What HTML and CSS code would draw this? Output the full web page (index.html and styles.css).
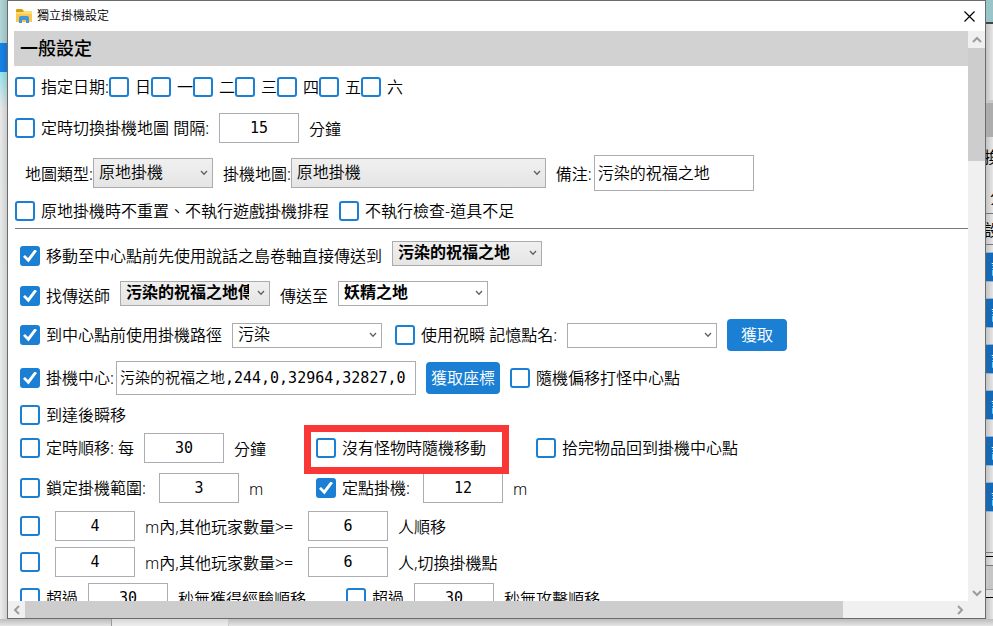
FILE: index.html
```html
<!DOCTYPE html>
<html lang="zh-Hant">
<head>
<meta charset="utf-8">
<title>獨立掛機設定</title>
<link rel="stylesheet" href="styles.css">
</head>
<body>
<svg class="defs" aria-hidden="true">
  <symbol id="down" viewBox="0 0 8 6"><path d="M1 1l3 3.2L7 1" fill="none" stroke="#606060" stroke-width="1.3"/></symbol>
  <symbol id="arrow" viewBox="0 0 10 10"><path d="M1 7l4-4 4 4" fill="none" stroke="#9c9c9c" stroke-width="2"/></symbol>
</svg>
<div class="desktop">
  <div class="behind behind-left"></div>
  <main class="window">
    <header class="titlebar">
      <svg class="folder" viewBox="0 0 16 15" aria-hidden="true"><path d="M0 3V1q0-1 1-1h5l2 2v1z" fill="#dc9c0c"/><path d="M0 3h7l1-1h7q1 0 1 1v10H0z" fill="#ffdc70"/><path d="M0 5h16v8H0z" fill="#fdc84c"/><path d="M3 14V9q0-2 2-2h6q2 0 2 2v5h-3v-3H6v3z" fill="#3f96dd"/></svg>
      <span class="title">獨立掛機設定</span>
      <button class="close" type="button" aria-label="關閉"><svg viewBox="0 0 11 11"><path d="M.5.5l10 10M10.500.5l-10 10" stroke="#000" stroke-width="1.200"/></svg></button>
    </header>
    <div class="body">
      <form class="content">
        <h1>一般設定</h1>
        <div class="row h41 tight">
          <label class="check"><input type="checkbox"><span>指定日期:</span></label>
          <label class="check"><input type="checkbox"><span>日</span></label>
          <label class="check"><input type="checkbox"><span>一</span></label>
          <label class="check"><input type="checkbox"><span>二</span></label>
          <label class="check"><input type="checkbox"><span>三</span></label>
          <label class="check"><input type="checkbox"><span>四</span></label>
          <label class="check"><input type="checkbox"><span>五</span></label>
          <label class="check"><input type="checkbox"><span>六</span></label>
        </div>
        <div class="row h41">
          <label class="check"><input type="checkbox"><span>定時切換掛機地圖 間隔:</span></label>
          <input class="num" type="text" value="15" aria-label="間隔">
          <span class="unit">分鐘</span>
        </div>
        <div class="row h50 maps">
          <div class="pair"><label class="unit" for="kind">地圖類型:</label><span class="combo w120 tall gray"><select id="kind"><option>原地掛機</option></select><svg><use href="#down"/></svg></span></div>
          <div class="pair"><label class="unit" for="map">掛機地圖:</label><span class="combo w255 tall gray"><select id="map"><option>原地掛機</option></select><svg><use href="#down"/></svg></span></div>
          <div class="pair"><label class="unit" for="note">備注:</label><input class="text note" id="note" type="text" value="污染的祝福之地"></div>
        </div>
        <div class="row h26">
          <label class="check"><input type="checkbox"><span>原地掛機時不重置、不執行遊戲掛機排程</span></label>
          <label class="check"><input type="checkbox"><span>不執行檢查-道具不足</span></label>
        </div>
        <hr>
        <div class="inner">
          <div class="row h40">
            <label class="check"><input type="checkbox" checked><span>移動至中心點前先使用說話之島卷軸直接傳送到</span></label>
            <span class="combo gray bold raised"><select aria-label="傳送到"><option>污染的祝福之地</option></select><svg><use href="#down"/></svg></span>
          </div>
          <div class="row h40">
            <label class="check"><input type="checkbox" checked><span>找傳送師</span></label>
            <span class="combo gray bold raised"><select aria-label="傳送師"><option>污染的祝福之地傳送師</option></select><svg><use href="#down"/></svg></span>
            <label for="dest">傳送至</label>
            <span class="combo bold raised"><select id="dest"><option>妖精之地</option></select><svg><use href="#down"/></svg></span>
          </div>
          <div class="row h38">
            <label class="check"><input type="checkbox" checked><span>到中心點前使用掛機路徑</span></label>
            <span class="combo"><select aria-label="掛機路徑"><option>污染</option></select><svg><use href="#down"/></svg></span>
            <label class="check gap-sm"><input type="checkbox"><span>使用祝瞬 記憶點名:</span></label>
            <span class="combo"><select aria-label="記憶點名"><option></option></select><svg><use href="#down"/></svg></span>
            <button class="action wide" type="button">獲取</button>
          </div>
          <div class="row h48">
            <div class="pair"><label class="check"><input type="checkbox" checked><span>掛機中心:</span></label><input class="text center" type="text" value="污染的祝福之地,244,0,32964,32827,0" aria-label="掛機中心"></div>
            <button class="action" type="button">獲取座標</button>
            <label class="check"><input type="checkbox"><span>隨機偏移打怪中心點</span></label>
          </div>
          <div class="row h26">
            <label class="check"><input type="checkbox"><span>到達後瞬移</span></label>
          </div>
          <div class="row h40">
            <div class="group first">
              <label class="check"><input type="checkbox"><span>定時順移: 每</span></label>
              <input class="num" type="text" value="30" aria-label="定時順移">
              <span class="unit">分鐘</span>
            </div>
            <label class="check marked"><input type="checkbox"><span>沒有怪物時隨機移動</span></label>
            <label class="check gap-lg"><input type="checkbox"><span>拾完物品回到掛機中心點</span></label>
          </div>
          <div class="row h40">
            <div class="group first">
              <label class="check"><input type="checkbox"><span>鎖定掛機範圍:</span></label>
              <input class="num gap-sm" type="text" value="3" aria-label="鎖定掛機範圍">
              <span class="unit">m</span>
            </div>
            <label class="check"><input type="checkbox" checked><span>定點掛機:</span></label>
            <input class="num gap-sm" type="text" value="12" aria-label="定點掛機">
            <span class="unit">m</span>
          </div>
          <div class="row h36">
            <input class="lone" type="checkbox" aria-label="其他玩家數量順移">
            <input class="num" type="text" value="4" aria-label="距離">
            <span class="unit count">m內,其他玩家數量&gt;=</span>
            <input class="num" type="text" value="6" aria-label="玩家數量">
            <span class="unit">人順移</span>
          </div>
          <div class="row h36">
            <input class="lone" type="checkbox" aria-label="其他玩家數量切換掛機點">
            <input class="num" type="text" value="4" aria-label="距離">
            <span class="unit count">m內,其他玩家數量&gt;=</span>
            <input class="num" type="text" value="6" aria-label="玩家數量">
            <span class="unit">人,切換掛機點</span>
          </div>
          <div class="row h36">
            <label class="check"><input type="checkbox"><span>超過</span></label>
            <input class="num" type="text" value="30" aria-label="無獲得經驗秒數">
            <span class="unit">秒無獲得經驗順移</span>
            <label class="check gap-md"><input type="checkbox"><span>超過</span></label>
            <input class="num" type="text" value="30" aria-label="無攻擊秒數">
            <span class="unit">秒無攻擊順移</span>
          </div>
        </div>
      </form>
      <div class="bar vertical">
        <span class="end"><svg><use href="#arrow"/></svg></span>
        <span class="track"><span class="thumb"></span></span>
        <span class="end"><svg class="turn-down"><use href="#arrow"/></svg></span>
      </div>
    </div>
    <div class="bar horizontal">
      <span class="end"><svg class="turn-left"><use href="#arrow"/></svg></span>
      <span class="track"><span class="thumb"></span></span>
      <span class="end"><svg class="turn-right"><use href="#arrow"/></svg></span>
      <span class="end"></span>
    </div>
  </main>
  <div class="behind behind-right">
    <div class="sky"></div>
    <div class="sheet"></div>
    <div class="header-strip"></div>
    <div class="peek">換</div>
    <div class="peek indent">分</div>
    <div class="peek ruled">設</div>
    <div class="tiles"><i>設</i><i>設</i><i>設</i><i>設</i><i>設</i><i>設</i></div>
    <div class="lines"></div>
    <div class="scroll-peek"></div>
  </div>
  <div class="behind behind-bottom"><span></span><span></span><span></span></div>
</div>
</body>
</html>
```
FILE: styles.css
```css
* { box-sizing: border-box; }

body {
  margin: 0;
  background: #e6e6e6;
  color: #000;
  font: 350 16px/20px "Noto Sans", "Noto Sans CJK TC", sans-serif;
}

.defs { display: none; }

.desktop {
  display: grid;
  grid-template-columns: 7px minmax(0, 1fr) 7px;
  grid-template-rows: minmax(0, 1fr) 7px;
  height: 100vh;
  overflow: hidden;
}

.window {
  display: flex;
  flex-direction: column;
  min-height: 0;
  border: 1px solid #686c6c;
  background: #fff;
}

.titlebar {
  display: flex;
  align-items: center;
  flex: none;
  height: 30px;
  padding: 0 10px 0 8px;
  font-size: 12px;
}
.folder { width: 16px; height: 15px; margin-right: 5px; }
.title { flex: 1; }
.close {
  display: flex;
  padding: 0;
  border: 0;
  background: none;
}
.close svg { width: 11px; height: 11px; }

.body { display: flex; flex: 1; min-height: 0; }

.content {
  flex: 1;
  min-width: 0;
  padding-left: 6px;
  overflow: hidden;
  white-space: nowrap;
}

h1 {
  margin: 0;
  padding: 0 6px;
  background: #d2d2d2;
  font-size: 18px;
  font-weight: 500;
  line-height: 35px;
}

.row {
  display: flex;
  align-items: center;
  gap: 10px;
  padding-left: 1px;
}
.row > *, .group > *, .pair > * { flex: none; }
.tight { gap: 0; }
.maps { padding-left: 11px; }
.h26 { height: 26px; }
.h36 { height: 36px; }
.h38 { height: 38px; }
.h40 { height: 40px; }
.h41 { height: 41px; }
.h48 { height: 48px; }
.h50 { height: 50px; }

.inner { padding: 7px 0 0 5px; }

hr {
  height: 1px;
  margin: 4px 0 0 1px;
  border: 0;
  background: #7a7a7a;
}

.group { display: flex; align-items: center; gap: 10px; }
.first { width: 286px; }
.pair { display: flex; align-items: center; }
.unit { padding-top: 2px; }
.count { min-width: 153px; }
.gap-sm { margin-left: 3px; }
.gap-md { margin-left: 30px; }
.gap-lg { margin-left: 40px; }

.check { display: flex; align-items: center; gap: 6px; }

input[type="checkbox"] {
  appearance: none;
  display: grid;
  place-items: center;
  width: 20px;
  height: 20px;
  margin: 0;
  border: 2px solid #1b7fd4;
  border-radius: 3px;
  background: #fff;
}
input[type="checkbox"]:checked { background: #1b7fd4; }
input[type="checkbox"]:checked::before {
  content: "";
  width: 14px;
  height: 13px;
  background: #fff;
  clip-path: polygon(0 56%, 14% 42%, 36% 66%, 83% 0, 100% 12%, 39% 100%);
}
input[type="checkbox"].lone { margin-right: 5px; }

.num, .text {
  border: 1px solid #abadb3;
  border-radius: 0;
  background: #fff;
  color: #000;
  font-family: "DejaVu Sans Mono", "Noto Sans CJK TC", monospace;
  font-size: 15px;
  font-weight: 350;
}
.num {
  width: 80px;
  height: 30px;
  padding: 0;
  text-align: center;
}
.text { padding: 0 3px 3px; }
.note { width: 160px; height: 36px; margin-left: 2px; font-size: 16px; }
.center { width: 300px; height: 34px; margin-left: 2px; }

.combo { position: relative; display: block; width: 150px; height: 25px; }
.w120 { width: 120px; }
.w255 { width: 255px; }
.tall { height: 30px; }
.raised { margin-bottom: 6px; }
.combo select {
  appearance: none;
  display: block;
  width: 100%;
  height: 100%;
  padding: 0 20px 2px 5px;
  border: 1px solid #acacac;
  border-radius: 0;
  background: #fff;
  color: #000;
  font: inherit;
}
.gray select { background: linear-gradient(#f0f0f0, #e5e5e5); }
.bold select { font-weight: 700; }
.combo svg {
  position: absolute;
  top: calc(50% - 3px);
  right: 5px;
  width: 8px;
  height: 6px;
  pointer-events: none;
}

.action {
  height: 32px;
  padding: 0 5px;
  border: 0;
  border-radius: 4px;
  background: #1b7fd4;
  color: #fff;
  font: inherit;
}
.wide { padding: 0 14px; }

.marked { position: relative; }
.marked::after {
  content: "";
  position: absolute;
  inset: -13px -23px -16px -12px;
  border: 7px solid #fa3737;
  pointer-events: none;
}

.bar { display: flex; flex: none; background: #f0f0f0; }
.vertical { flex-direction: column; width: 17px; }
.horizontal { height: 17px; }
.end { display: grid; place-items: center; width: 17px; height: 17px; }
.end svg { width: 10px; height: 10px; }
.turn-down { transform: rotate(180deg); }
.turn-left { transform: rotate(-90deg); }
.turn-right { transform: rotate(90deg); }
.track { flex: 1; }
.thumb { display: block; background: #cdcdcd; }
.vertical .thumb { height: 21%; }
.horizontal .thumb { width: 88.300%; height: 100%; }

.behind { overflow: hidden; }
.behind-left {
  background:
    linear-gradient(90deg, transparent, rgba(0, 0, 0, .12)),
    linear-gradient(#b0d6d8 43px, #1683e8 43px, #1683e8 72px, #98e6f0 72px, #e8eaea 108px, #ededed);
}
.behind-right {
  display: flex;
  flex-direction: column;
  background: linear-gradient(90deg, #c4c4c4, #e6e6e6);
  font-weight: 400;
}
.behind-right > * { flex: none; }
.sky { height: 24px; border-bottom: 2px solid #444; background: #9ac5c8; }
.sheet { height: 79px; border-bottom: 3px solid #c9c9c9; }
.header-strip { height: 34px; background: #adadad; }
.peek { height: 40px; padding-top: 10px; margin-left: -2px; }
.indent { height: 36px; margin-left: 4px; }
.ruled { height: 32px; padding-top: 6px; border: solid #777; border-width: 1px 0; }
.tiles { display: grid; gap: 16px; padding-top: 7px; }
.tiles i {
  height: 30px;
  padding: 5px;
  border: solid #82b4de;
  border-width: 1px 0;
  background: #1769b3;
  color: #fff;
  font-style: normal;
  overflow: hidden;
}
.lines { height: 14px; margin-top: 40px; border: 1px solid #777; border-width: 1px 0; background: linear-gradient(transparent 3px, #000 3px, #000 4px, transparent 4px); }
.scroll-peek { height: 32px; border-bottom: 1px solid #000; background: linear-gradient(#c6c6c6 23px, #999 23px, #999 24px, #ddd 24px); }

.behind-bottom {
  grid-column: 1 / -1;
  display: grid;
  grid-template-columns: 112px 117px 1fr;
  background: linear-gradient(#bcbcbc, #e6e6e6);
}
.behind-bottom span { border-right: 1px solid #999; }
.behind-bottom span:nth-child(2) { border-color: #ccc; background: rgba(255, 255, 255, .4); }
.behind-bottom span:last-child { border: 0; }
```
